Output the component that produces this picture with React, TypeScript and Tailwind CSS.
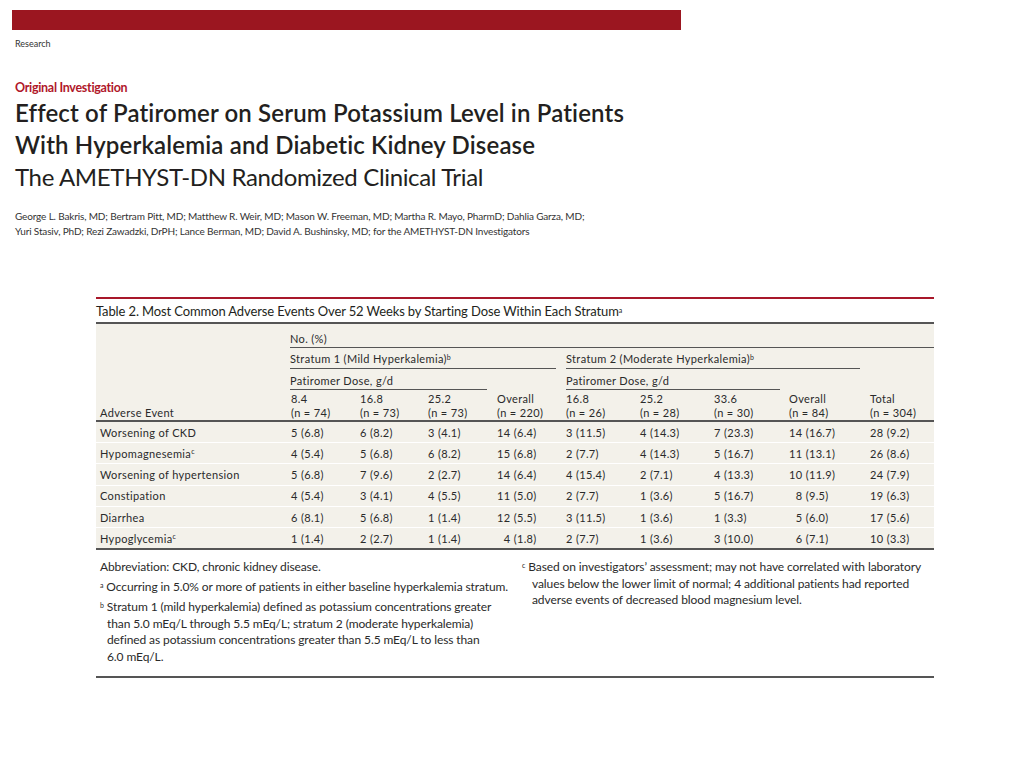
import React from 'react';

const F = '\u2007';

const rows = [
  { name: 'Worsening of CKD', sup: '', v: ['5 (6.8)', '6 (8.2)', '3 (4.1)', '14 (6.4)', '3 (11.5)', '4 (14.3)', '7 (23.3)', '14 (16.7)', '28 (9.2)'] },
  { name: 'Hypomagnesemia', sup: 'c', v: ['4 (5.4)', '5 (6.8)', '6 (8.2)', '15 (6.8)', '2 (7.7)', '4 (14.3)', '5 (16.7)', '11 (13.1)', '26 (8.6)'] },
  { name: 'Worsening of hypertension', sup: '', v: ['5 (6.8)', '7 (9.6)', '2 (2.7)', '14 (6.4)', '4 (15.4)', '2 (7.1)', '4 (13.3)', '10 (11.9)', '24 (7.9)'] },
  { name: 'Constipation', sup: '', v: ['4 (5.4)', '3 (4.1)', '4 (5.5)', '11 (5.0)', '2 (7.7)', '1 (3.6)', '5 (16.7)', F + '8 (9.5)', '19 (6.3)'] },
  { name: 'Diarrhea', sup: '', v: ['6 (8.1)', '5 (6.8)', '1 (1.4)', '12 (5.5)', '3 (11.5)', '1 (3.6)', '1 (3.3)', F + '5 (6.0)', '17 (5.6)'] },
  { name: 'Hypoglycemia', sup: 'c', v: ['1 (1.4)', '2 (2.7)', '1 (1.4)', F + '4 (1.8)', '2 (7.7)', '1 (3.6)', '3 (10.0)', F + '6 (7.1)', '10 (3.3)'] },
];

const doses = [
  ['8.4', '(n = 74)'],
  ['16.8', '(n = 73)'],
  ['25.2', '(n = 73)'],
  ['Overall', '(n = 220)'],
  ['16.8', '(n = 26)'],
  ['25.2', '(n = 28)'],
  ['33.6', '(n = 30)'],
  ['Overall', '(n = 84)'],
  ['Total', '(n = 304)'],
];

const Sup = ({ c }: { c: string }) => <sup className="text-[7px]">{c}</sup>;

const DoseHead = ({ i }: { i: number }) => (
  <div className="leading-[14px]">
    {doses[i][0]}
    <br />
    {doses[i][1]}
  </div>
);

const StudyTable = () => {
  return (
    <div className="ml-[96px] mt-[58px] w-[838px]">
      <div className="border-t-2 border-[#a8182a] pt-[4px] pb-[3px] text-[13px] leading-[16px] text-[#231f20] tracking-[-0.12px]">
        Table 2. Most Common Adverse Events Over 52 Weeks by Starting Dose Within Each Stratum<Sup c="a" />
      </div>
      <table className="w-full border-collapse table-fixed bg-[#f3f1ea] text-[11px] leading-[15px] text-[#2a2a2a] tracking-[0.35px] border-t-2 border-b-2 border-[#555]">
        <colgroup>
          <col className="w-[191px]" />
          <col className="w-[69px]" />
          <col className="w-[68px]" />
          <col className="w-[69px]" />
          <col className="w-[69px]" />
          <col className="w-[74px]" />
          <col className="w-[74px]" />
          <col className="w-[75px]" />
          <col className="w-[81px]" />
          <col className="w-[68px]" />
        </colgroup>
        <thead>
          <tr>
            <th rowSpan={4} className="align-bottom text-left font-normal pl-[4px] pb-0">Adverse Event</th>
            <th colSpan={9} className="text-left font-normal pl-[3px] pt-[7px]">
              <div className="border-b border-[#555] pb-[1px]">No. (%)</div>
            </th>
          </tr>
          <tr>
            <th colSpan={4} className="text-left font-normal pl-[3px] pr-[6px] pt-[3px]">
              <div className="border-b border-[#555] pb-[2px]">
                Stratum 1 (Mild Hyperkalemia)<Sup c="b" />
              </div>
            </th>
            <th colSpan={4} className="text-left font-normal pl-[4px] pr-[6px] pt-[3px]">
              <div className="border-b border-[#555] pb-[2px]">
                Stratum 2 (Moderate Hyperkalemia)<Sup c="b" />
              </div>
            </th>
            <th rowSpan={3} className="align-bottom text-left font-normal pl-[4px] pb-0">
              <DoseHead i={8} />
            </th>
          </tr>
          <tr>
            <th colSpan={3} className="text-left font-normal pl-[3px] pr-[6px] pt-[4px]">
              <div className="border-b border-[#555] pb-[1px]">Patiromer Dose, g/d</div>
            </th>
            <th rowSpan={2} className="align-bottom text-left font-normal pl-[4px] pb-0">
              <DoseHead i={3} />
            </th>
            <th colSpan={3} className="text-left font-normal pl-[4px] pr-[5px] pt-[4px]">
              <div className="border-b border-[#555] pb-[1px]">Patiromer Dose, g/d</div>
            </th>
            <th rowSpan={2} className="align-bottom text-left font-normal pl-[4px] pb-0">
              <DoseHead i={7} />
            </th>
          </tr>
          <tr>
            {[0, 1, 2, 4, 5, 6].map((i) => (
              <th key={i} className="text-left font-normal pl-[4px] pt-[2px] pb-0">
                <DoseHead i={i} />
              </th>
            ))}
          </tr>
        </thead>
        <tbody className="border-t-2 border-[#555]">
          {rows.map((r, idx) => (
            <tr key={r.name} className={idx < rows.length - 1 ? 'border-b border-white h-[21.3px]' : 'h-[21.3px]'}>
              <td className="pl-[4px]">
                {r.name}
                {r.sup && <Sup c={r.sup} />}
              </td>
              {r.v.map((v, i) => (
                <td key={i} className="pl-[4px] whitespace-pre">{v}</td>
              ))}
            </tr>
          ))}
        </tbody>
      </table>
      <div className="grid grid-cols-[426px_1fr] border-b-2 border-[#555] pt-[9px] pb-[11px] text-[12px] leading-[16.5px] text-[#2a2a2a] tracking-[-0.1px]">
        <div className="pl-[4px]">
          <p>Abbreviation: CKD, chronic kidney disease.</p>
          <p className="mt-[3.5px] whitespace-nowrap">
            <Sup c="a" /> Occurring in 5.0% or more of patients in either baseline hyperkalemia stratum.
          </p>
          <p className="mt-[3.5px] pl-[7px] -indent-[7px] whitespace-nowrap">
            <Sup c="b" /> Stratum 1 (mild hyperkalemia) defined as potassium concentrations greater
            <br />
            than 5.0 mEq/L through 5.5 mEq/L; stratum 2 (moderate hyperkalemia)
            <br />
            defined as potassium concentrations greater than 5.5 mEq/L to less than
            <br />
            6.0 mEq/L.
          </p>
        </div>
        <div className="pr-[4px]">
          <p className="pl-[10px] -indent-[10px] whitespace-nowrap tracking-[-0.1px]">
            <Sup c="c" /> Based on investigators’ assessment; may not have correlated with laboratory
            <br />
            values below the lower limit of normal; 4 additional patients had reported
            <br />
            adverse events of decreased blood magnesium level.
          </p>
        </div>
      </div>
    </div>
  );
};

export default function App() {
  return (
    <div className="w-[1024px] h-[768px] bg-white overflow-hidden font-['Lato','Liberation_Sans',sans-serif]">
      <div className="ml-[12px] mt-[10px] w-[669px] h-[20px] bg-[#9b1620]" />
      <div className="ml-[15px] mt-[7px] text-[9px] text-[#333]">Research</div>
      <div className="ml-[15px] mt-[28px] text-[12.5px] font-bold text-[#b0172a] tracking-[-0.3px]">Original Investigation</div>
      <h1 className="ml-[15px] text-[24px] leading-[32px] font-semibold text-[#231f20] tracking-[0.15px]">
        Effect of Patiromer on Serum Potassium Level in Patients
        <br />
        With Hyperkalemia and Diabetic Kidney Disease
      </h1>
      <h2 className="ml-[15px] text-[24px] leading-[32px] font-normal text-[#231f20] tracking-[-0.35px]">
        The AMETHYST-DN Randomized Clinical Trial
      </h2>
      <p className="ml-[15px] mt-[16px] w-[640px] text-[10px] leading-[15px] text-[#333] tracking-[-0.15px]">
        George L. Bakris, MD; Bertram Pitt, MD; Matthew R. Weir, MD; Mason W. Freeman, MD; Martha R. Mayo, PharmD; Dahlia Garza, MD;
        <br />
        Yuri Stasiv, PhD; Rezi Zawadzki, DrPH; Lance Berman, MD; David A. Bushinsky, MD; for the AMETHYST-DN Investigators
      </p>
      <StudyTable />
    </div>
  );
}
